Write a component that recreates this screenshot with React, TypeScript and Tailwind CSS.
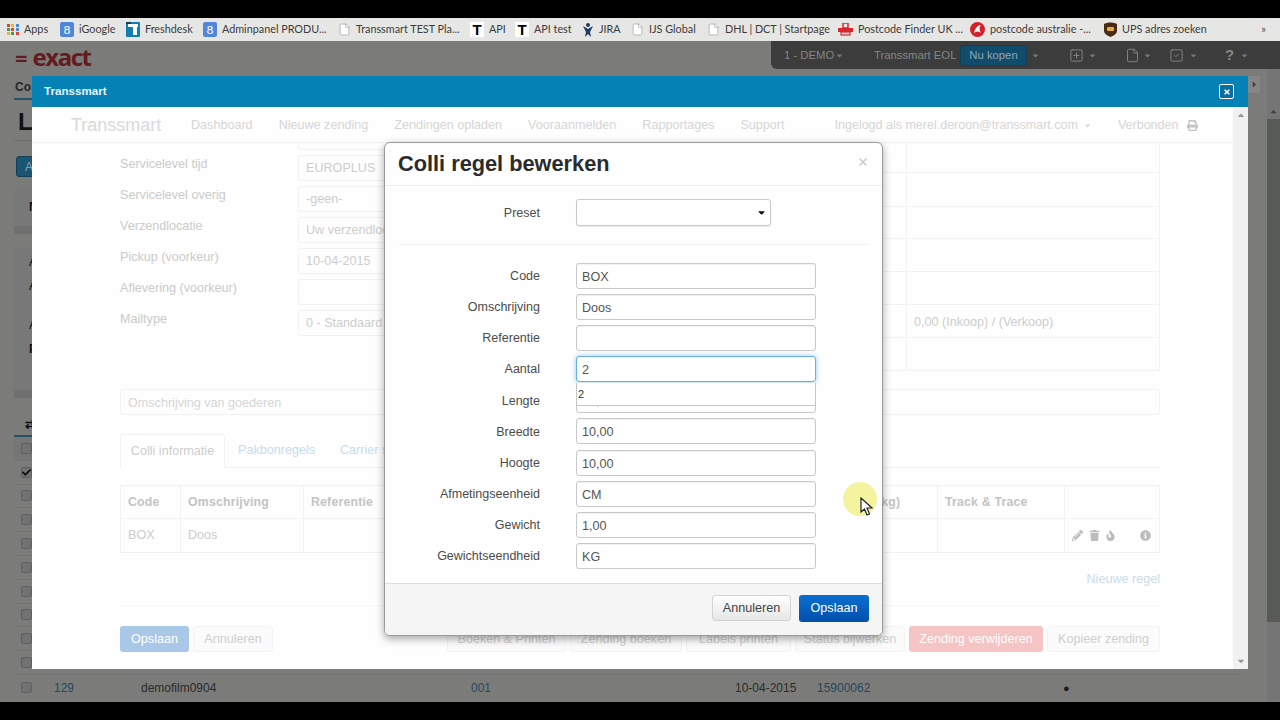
import { File, SquarePlus, SquareCheck, X } from 'lucide-react';
import { FaCaretDown, FaCaretUp, FaCaretRight, FaFire, FaInfoCircle, FaPencilAlt, FaPrint, FaTrash, FaCheck, FaTimes } from 'react-icons/fa';
import type { ReactNode } from 'react';

const AppsIcon = () => {
  const colors = ['#d8453a', '#e8b53a', '#4a8ad8', '#3f9f5a', '#d8453a', '#4a8ad8', '#e8b53a', '#3f9f5a', '#d8453a'];
  return (
    <div className="grid grid-cols-3 gap-[1px] w-[12px] h-[12px]">
      {colors.map((c, i) => (
        <span key={i} className="block w-[3px] h-[3px]" style={{ backgroundColor: c }} />
      ))}
    </div>
  );
};

const GoogleIcon = () => (
  <div className="w-[14px] h-[15px] rounded-[2px] bg-[#4f86dc] flex items-center justify-center text-white text-[12px] leading-none">8</div>
);

const FreshdeskIcon = () => (
  <svg width="14" height="15" viewBox="0 0 14 15">
    <rect width="14" height="15" rx="1" fill="#127cb4" />
    <rect x="2" y="2" width="10" height="3" fill="#fff" />
    <rect x="7" y="5" width="4" height="8" fill="#fff" />
    <rect x="0" y="0" width="5" height="2" fill="#0b3f60" />
  </svg>
);

const TransIcon = () => (
  <div className="w-[14px] h-[15px] bg-white flex items-center justify-center text-black text-[15px] font-bold leading-none font-['Liberation_Sans',sans-serif]">T</div>
);

const DocIcon = () => <File size={13} strokeWidth={1} className="text-[#8a8a8a] fill-white" />;

const JiraIcon = () => (
  <svg width="12" height="16" viewBox="0 0 12 16">
    <circle cx="6" cy="3" r="2" fill="#1f3a5f" />
    <path d="M1 4 L6 7 L11 4 L8 10 L9 15 L6 12 L3 15 L4 10 Z" fill="#1f3a5f" />
  </svg>
);

const PostcodeIcon = () => (
  <svg width="15" height="13" viewBox="0 0 15 13">
    <rect x="0" y="5" width="15" height="4" fill="#d8262c" />
    <rect x="5" y="0" width="5" height="5" fill="none" stroke="#d8262c" strokeWidth="1.5" />
    <rect x="3" y="9" width="9" height="3" fill="none" stroke="#d8262c" strokeWidth="1.2" />
  </svg>
);

const AusPostIcon = () => (
  <svg width="15" height="15" viewBox="0 0 15 15">
    <circle cx="7.5" cy="7.5" r="7.5" fill="#d4202a" />
    <path d="M4 11 C5 6 8 3 11 3 C9 5 9 8 11 11 C9 9 7 9 4 11 Z" fill="#fff" />
  </svg>
);

const UpsIcon = () => (
  <svg width="13" height="15" viewBox="0 0 13 15">
    <path d="M0 2 C4 0 9 0 13 2 L13 9 C13 12 9 14 6.5 15 C4 14 0 12 0 9 Z" fill="#4a2a12" />
    <rect x="3" y="5" width="7" height="4" rx="1" fill="#e2b13c" />
  </svg>
);

const bookmarks: { icon: ReactNode; label: string; width: number }[] = [
  { icon: <AppsIcon />, label: 'Apps', width: 53 },
  { icon: <GoogleIcon />, label: 'iGoogle', width: 66 },
  { icon: <FreshdeskIcon />, label: 'Freshdesk', width: 77 },
  { icon: <GoogleIcon />, label: 'Adminpanel PRODU...', width: 135 },
  { icon: <DocIcon />, label: 'Transsmart TEST Pla...', width: 132 },
  { icon: <TransIcon />, label: 'API', width: 45 },
  { icon: <TransIcon />, label: 'API test', width: 67 },
  { icon: <JiraIcon />, label: 'JIRA', width: 49 },
  { icon: <DocIcon />, label: 'IJS Global', width: 76 },
  { icon: <DocIcon />, label: 'DHL | DCT | Startpage', width: 131 },
  { icon: <PostcodeIcon />, label: 'Postcode Finder UK ...', width: 132 },
  { icon: <AusPostIcon />, label: 'postcode australie -...', width: 134 },
  { icon: <UpsIcon />, label: 'UPS adres zoeken', width: 120 },
];

const BookmarkBar = () => (
  <div className="h-[23px] bg-[#e6e6e4] flex items-center pl-[7px] font-['Lato',sans-serif] text-[10.8px] text-[#3c3c3c]">
    {bookmarks.map((b) => (
      <div key={b.label} className="flex items-center gap-[5px] shrink-0 whitespace-nowrap" style={{ width: b.width }}>
        {b.icon}
        <span>{b.label}</span>
      </div>
    ))}
    <span className="ml-auto mr-[14px] text-[#555]">»</span>
  </div>
);

const TopToolbar = () => (
  <div className="h-[28px] flex justify-between">
    <div className="pl-[15px] pt-[6px] flex items-center gap-[5px] h-[26px] text-[#641a1e] font-['Open_Sans',sans-serif] font-bold leading-none">
      <span className="text-[22px]">=</span>
      <span className="text-[24px] tracking-[-1.5px]">exact</span>
    </div>
    <div className="w-[509px] bg-[#3b3c3b] rounded-bl-md flex items-center text-[#858685] text-[11.3px] pl-[13px]">
      <span className="w-[47px] whitespace-nowrap">1 - DEMO</span>
      <FaCaretDown size={9} className="ml-[4px] text-[#777]" />
      <span className="ml-[30px] w-[78px] whitespace-nowrap">Transsmart EOL</span>
      <span className="ml-[8px] w-[67px] h-[21px] rounded-[3px] bg-[#124c6c] border border-[#0e3e58] flex items-center justify-center text-[#8ea6b3]">Nu kopen</span>
      <FaCaretDown size={9} className="ml-[4px] text-[#777]" />
      <SquarePlus size={15} strokeWidth={1.5} className="ml-[29px] text-[#858685]" />
      <FaCaretDown size={9} className="ml-[4px] text-[#777]" />
      <File size={15} strokeWidth={1.5} className="ml-[28px] text-[#858685]" />
      <FaCaretDown size={9} className="ml-[3px] text-[#777]" />
      <SquareCheck size={15} strokeWidth={1.5} className="ml-[17px] text-[#858685]" />
      <FaCaretDown size={9} className="ml-[5px] text-[#777]" />
      <span className="ml-[27px] text-[15px] font-bold">?</span>
      <FaCaretDown size={9} className="ml-[6px] text-[#777]" />
    </div>
  </div>
);

const BgCheck = ({ checked }: { checked?: boolean }) => (
  <span className="w-[11px] h-[11px] rounded-[2px] bg-[#707170] border border-[#5f605f] flex items-center justify-center shrink-0">
    {checked && <FaCheck size={9} className="text-[#111]" />}
  </span>
);

const BackgroundPage = () => (
  <div className="flex flex-1 min-h-0">
    <div className="flex-1 pl-[14px] pr-[24px] flex flex-col min-w-0 text-[#252625]">
      <div className="h-[31px] border-b-2 border-[#23526b] pl-[1px] pt-[12px] text-[12px] font-bold leading-none">Co</div>
      <div className="h-[41px] border-b border-dotted border-[#5c5d5c] pl-[4px] pt-[10px] text-[24px] font-bold leading-none text-[#111]">Le</div>
      <div className="mt-[15px] ml-[2px] h-[21px] w-[60px] rounded-[3px] bg-[#1a5571] border border-[#123f57] text-[#86a0ae] text-[12px] pl-[8px] leading-[20px]">A</div>
      <div className="mt-[11px] h-[38px] bg-[#777877] pl-[15px] pt-[13px] text-[12px] font-bold leading-none text-[#111]">N</div>
      <div className="h-[8px] bg-[#6f706f]" />
      <div className="mt-[14px] h-[142px] bg-[#777877] pl-[15px] text-[12px] leading-[24px] text-[#111] pt-[2px]">
        <div>A</div>
        <div>A</div>
        <div className="mt-[15px]">A</div>
        <div className="font-bold">P</div>
      </div>
      <div className="h-[8px] bg-[#6f706f]" />
      <div className="mt-[17px] h-[22px] border-b-2 border-[#23526b] pl-[11px] text-[12px] font-bold leading-[18px] text-[#111]">⇄</div>
      <div className="flex flex-col">
        {Array.from({ length: 10 }).map((_, i) => (
          <div key={i} className={`h-[23.8px] pl-[7px] flex items-center border-b border-[#727372] ${i === 0 ? 'bg-[#757675]' : ''}`}>
            <BgCheck checked={i === 1} />
          </div>
        ))}
        <div className="h-[26px] pl-[7px] flex items-center text-[12px] text-[#2a2b2a]">
          <BgCheck />
          <span className="ml-[22px] w-[87px] text-[#26475c]">129</span>
          <span className="w-[330px]">demofilm0904</span>
          <span className="w-[264px] text-[#26475c]">001</span>
          <span className="w-[82px]">10-04-2015</span>
          <span className="w-[246px] text-[#26475c]">15900062</span>
          <span className="text-[#1c1c1c] text-[11px]">●</span>
        </div>
      </div>
    </div>
    <div className="w-[13px] pt-[38px] bg-[#747574] flex flex-col items-center">
      <FaCaretUp size={9} className="text-[#3f403f]" />
      <div className="w-full h-[503px] mt-[3px] bg-[#585a58]" />
    </div>
  </div>
);

const GhostInput = ({ children, className = '' }: { children?: ReactNode; className?: string }) => (
  <div className={`h-[26px] rounded-[3px] border border-[#f1f2f1] pl-[7px] text-[12.6px] leading-[24px] text-[#cdcdcd] whitespace-nowrap overflow-hidden ${className}`}>{children}</div>
);

const ghostRows = [
  ['Servicelevel tijd', 'EUROPLUS'],
  ['Servicelevel overig', '-geen-'],
  ['Verzendlocatie', 'Uw verzendlocatie'],
  ['Pickup (voorkeur)', '10-04-2015'],
  ['Aflevering (voorkeur)', ''],
  ['Mailtype', '0 - Standaard'],
];

const navItems = ['Dashboard', 'Nieuwe zending', 'Zendingen opladen', 'Vooraanmelden', 'Rapportages', 'Support'];

const GhostButton = ({ children, className }: { children: ReactNode; className: string }) => (
  <div className={`h-[26px] rounded-[3px] flex items-center justify-center text-[12.6px] whitespace-nowrap ${className}`}>{children}</div>
);

// columns that lie fully behind the modal have no visible heading
const tableCols = [
  { label: 'Code', value: 'BOX', w: 'w-[60px] pl-[7px]' },
  { label: 'Omschrijving', value: 'Doos', w: 'w-[123px] pl-[7px]' },
  { label: 'Referentie', value: '', w: 'w-[127px] pl-[7px]' },
  { label: '', value: '', w: 'w-[383px] pl-[7px]' },
  { label: 'Gewicht (kg)', value: '', w: 'w-[124px] pl-[10px]' },
  { label: 'Track & Trace', value: '', w: 'w-[127px] pl-[7px]' },
];

const GhostForm = () => (
  <div className="flex-1 min-w-0 flex flex-col overflow-hidden">
    <div className="h-[36px] shrink-0 border-b border-[#f1f2f1] flex items-center pl-[39px] pt-[1px] text-[12.5px] text-[#d6d6d6] whitespace-nowrap">
      <span className="text-[18px] text-[#dadada] w-[120px]">Transsmart</span>
      <div className="flex gap-[26px] text-[12.6px]">
        {navItems.map((n) => (
          <span key={n}>{n}</span>
        ))}
      </div>
      <span className="ml-[50px]">Ingelogd als merel.deroon@transsmart.com</span>
      <FaCaretDown size={9} className="ml-[5px]" />
      <span className="ml-[26px]">Verbonden</span>
      <FaPrint size={11} className="ml-[9px] text-[#c4c4c4]" />
    </div>
    <div className="pl-[88px] w-[1128px] flex flex-col">
      <div className="flex h-[228px]">
        <div className="w-[740px] shrink-0 text-[12.6px] text-[#cbcbcb]">
          <div className="ml-[178px] h-[7px] border border-t-0 rounded-b-[3px] border-[#f1f2f1]" />
          <div className="mt-[5px] flex flex-col gap-[5px]">
            {ghostRows.map(([label, value]) => (
              <div key={label} className="flex">
                <span className="w-[178px]">{label}</span>
                <GhostInput className="flex-1">{value}</GhostInput>
              </div>
            ))}
          </div>
        </div>
        <div className="w-[300px] shrink-0 text-[12.6px] text-[#cdcdcd]">
          {[30, 34, 32, 33, 33, 33, 33].map((h, i) => (
            <div key={i} className="border-b border-[#f1f2f1] border-r flex" style={{ height: h }}>
              <div className="ml-[46px] flex-1 border-l border-[#f1f2f1] pl-[7px] leading-[34px] whitespace-nowrap">
                {i === 5 ? '0,00 (Inkoop) / (Verkoop)' : ''}
              </div>
            </div>
          ))}
        </div>
      </div>
      <GhostInput className="mt-[18px] text-[#d6d6d6] pl-[5px] leading-[26px]">Omschrijving van goederen</GhostInput>
      <div className="mt-[19px] h-[34px] border-b border-[#f1f2f1] flex text-[12.6px]">
        <div className="w-[105px] h-[34px] border border-b-0 border-[#f1f2f1] rounded-t-[3px] bg-white flex items-center justify-center text-[#cdcdcd]">Colli informatie</div>
        <div className="ml-[13px] leading-[33px] text-[#c8dcec]">Pakbonregels</div>
        <div className="ml-[25px] leading-[33px] text-[#c8dcec]">Carrier specificaties</div>
      </div>
      <div className="mt-[17px] border border-[#f1f2f1] text-[12.6px]">
        <div className="flex h-[33px] border-b border-[#f1f2f1] font-bold text-[12.3px] text-[#c4c4c4] tracking-[0.2px]">
          {tableCols.map((c, i) => (
            <div key={i} className={`${c.w} border-r border-[#f1f2f1] leading-[33px] whitespace-nowrap`}>{c.label}</div>
          ))}
          <div className="flex-1" />
        </div>
        <div className="flex h-[33px] text-[#cdcdcd]">
          {tableCols.map((c, i) => (
            <div key={i} className={`${c.w} border-r border-[#f1f2f1] leading-[33px]`}>{c.value}</div>
          ))}
          <div className="flex-1 flex items-center pl-[7px] text-[#bcbcbc] text-[11px]">
            <FaPencilAlt />
            <FaTrash className="ml-[6px]" />
            <FaFire className="ml-[5px]" />
            <FaInfoCircle className="ml-[24px]" />
          </div>
        </div>
      </div>
      <div className="mt-[18px] h-[16px] text-right text-[12.6px] leading-[16px] text-[#c8dcec]">Nieuwe regel</div>
      <div className="mt-[18px] border-b border-[#f5f6f5]" />
      <div className="mt-[20px] flex">
        <GhostButton className="w-[69px] bg-[#a9c8e8] text-white">Opslaan</GhostButton>
        <GhostButton className="ml-[4px] w-[80px] bg-[#fafbfa] border border-[#f3f3f3] text-[#cfcfcf]">Annuleren</GhostButton>
        <GhostButton className="ml-[174px] w-[119px] bg-[#fafbfa] border border-[#f3f3f3] text-[#cfcfcf]">Boeken &amp; Printen</GhostButton>
        <GhostButton className="ml-[4px] w-[112px] bg-[#fafbfa] border border-[#f3f3f3] text-[#cfcfcf]">Zending boeken</GhostButton>
        <GhostButton className="ml-[4px] w-[105px] bg-[#fafbfa] border border-[#f3f3f3] text-[#cfcfcf]">Labels printen</GhostButton>
        <GhostButton className="ml-[4px] w-[110px] bg-[#fafbfa] border border-[#f3f3f3] text-[#cfcfcf]">Status bijwerken</GhostButton>
        <GhostButton className="ml-[4px] w-[134px] bg-[#f5c4c4] text-white">Zending verwijderen</GhostButton>
        <GhostButton className="ml-[4px] w-[113px] bg-[#fafbfa] border border-[#f3f3f3] text-[#cfcfcf]">Kopieer zending</GhostButton>
      </div>
    </div>
  </div>
);

const fields = [
  { label: 'Code', value: 'BOX' },
  { label: 'Omschrijving', value: 'Doos' },
  { label: 'Referentie', value: '' },
  { label: 'Aantal', value: '2', focused: true },
  { label: 'Lengte', value: '10,00' },
  { label: 'Breedte', value: '10,00' },
  { label: 'Hoogte', value: '10,00' },
  { label: 'Afmetingseenheid', value: 'CM' },
  { label: 'Gewicht', value: '1,00' },
  { label: 'Gewichtseendheid', value: 'KG' },
];

const ModalField = ({ label, value, focused }: { label: string; value: string; focused?: boolean }) => (
  <div className="flex items-center h-[26px]">
    <label className="w-[155px] pt-[1px] text-right text-[12.5px] text-[#4c4c4c] whitespace-nowrap">{label}</label>
    <div className="relative ml-[36px] w-[240px] h-[26px]">
      <input
        readOnly
        value={value}
        className={`w-full h-full rounded-[3px] border bg-white px-[5px] pt-[2px] text-[12.6px] text-[#555] outline-none ${
          focused ? 'border-[#66afe9] shadow-[0_0_5px_rgba(102,175,233,0.7)]' : 'border-[#c8c8c8] shadow-[inset_0_1px_1px_rgba(0,0,0,0.06)]'
        }`}
      />
      {focused && (
        <div className="absolute z-10 left-0 top-[27px] w-[240px] h-[23px] bg-white border border-[#c4c4c4] border-t-0 pl-[1px] text-[11px] leading-[22px] text-[#333]">2</div>
      )}
    </div>
  </div>
);

const Modal = () => (
  <div className="absolute left-[352px] top-[66px] w-[499px] h-[494px] bg-[#fdfefd] border border-[#9a9a9a] rounded-md shadow-[0_3px_9px_rgba(0,0,0,0.35)] flex flex-col overflow-hidden">
    <div className="h-[43px] shrink-0 border-b border-[#eeeeee] flex items-center justify-between pl-[13px] pr-[13px]">
      <h3 className="text-[21.75px] font-bold text-[#2b2b2b] whitespace-nowrap">Colli regel bewerken</h3>
      <X size={12} strokeWidth={3} className="mb-[5px] text-[#c8c8c8]" />
    </div>
    <div className="mt-[13px] flex items-center h-[27px]">
      <label className="w-[155px] pt-[1px] text-right text-[12.5px] text-[#4c4c4c]">Preset</label>
      <div className="ml-[36px] w-[195px] h-[27px] rounded-[3px] border border-[#c8c8c8] bg-white flex items-center justify-end pr-[3px] shadow-[0_1px_1px_rgba(0,0,0,0.08)]">
        <FaCaretDown size={11} className="text-[#111]" />
      </div>
    </div>
    <div className="mt-[18px] mx-[14px] border-t border-[#f0f0f0]" />
    <div className="mt-[18px] flex flex-col gap-[5.1px]">
      {fields.map((f) => (
        <ModalField key={f.label} {...f} />
      ))}
    </div>
    <div className="mt-[14px] flex-1 border-t border-[#dddddd] bg-[#f5f5f5] flex items-center justify-end gap-[8px] pr-[13px] pb-[2px] text-[12.6px]">
      <button className="w-[79px] h-[26px] rounded-[3px] border border-[#d4d4d4] bg-gradient-to-b from-white to-[#e6e6e6] text-[#444]">Annuleren</button>
      <button className="w-[70px] h-[27px] rounded-[3px] bg-gradient-to-b from-[#0a6fd0] to-[#0350ac] text-white">Opslaan</button>
    </div>
  </div>
);

const CursorHighlight = () => (
  <div className="absolute left-[811px] top-[406px] w-[34px] h-[34px] rounded-full bg-[#f3f3a0]">
    <svg width="13" height="20" viewBox="0 0 13 20" className="absolute left-[17px] top-[15px]">
      <path d="M1 1 L1 15 L4.5 12 L7 18 L9.5 17 L7 11 L12 11 Z" fill="#fff" stroke="#222" strokeWidth="1.2" />
    </svg>
  </div>
);

const TransmartWindow = () => (
  <div className="absolute left-[32px] top-[35px] w-[1216px] h-[593px] flex flex-col bg-[#fdfefd]">
    <div className="h-[31px] shrink-0 bg-[#0581b5] flex items-center justify-between pl-[12px] pr-[14px]">
      <span className="pb-[1px] text-[11.6px] font-bold text-[#e6f4fa]">Transsmart</span>
      <span className="w-[15px] h-[15px] rounded-[2px] border border-white bg-[#0a6f9e] flex items-center justify-center">
        <FaTimes size={8} className="text-white" />
      </span>
    </div>
    <div className="flex-1 min-h-0 flex">
      <GhostForm />
      <div className="w-[15px] shrink-0 bg-[#f0f1f0] flex flex-col items-center justify-between py-[3px] text-[#999]">
        <FaCaretUp size={10} />
        <FaCaretDown size={10} />
      </div>
    </div>
    <Modal />
    <CursorHighlight />
  </div>
);

export default function App() {
  return (
    <div className="w-[1280px] h-[720px] bg-black flex flex-col overflow-hidden font-['Liberation_Sans',Arial,sans-serif]">
      <div className="h-[18px] shrink-0 bg-black" />
      <BookmarkBar />
      <div className="relative flex-1 min-h-0 bg-[#7b7c7a] flex flex-col overflow-hidden">
        <TopToolbar />
        <BackgroundPage />
        <TransmartWindow />
        <div className="absolute left-[1248px] top-[35px] w-[12px] h-[17px] bg-[#858685] rounded-r-[2px] flex items-center justify-center">
          <FaCaretRight size={9} className="text-[#3b3c3b]" />
        </div>
      </div>
      <div className="h-[18px] shrink-0 bg-black" />
    </div>
  );
}
